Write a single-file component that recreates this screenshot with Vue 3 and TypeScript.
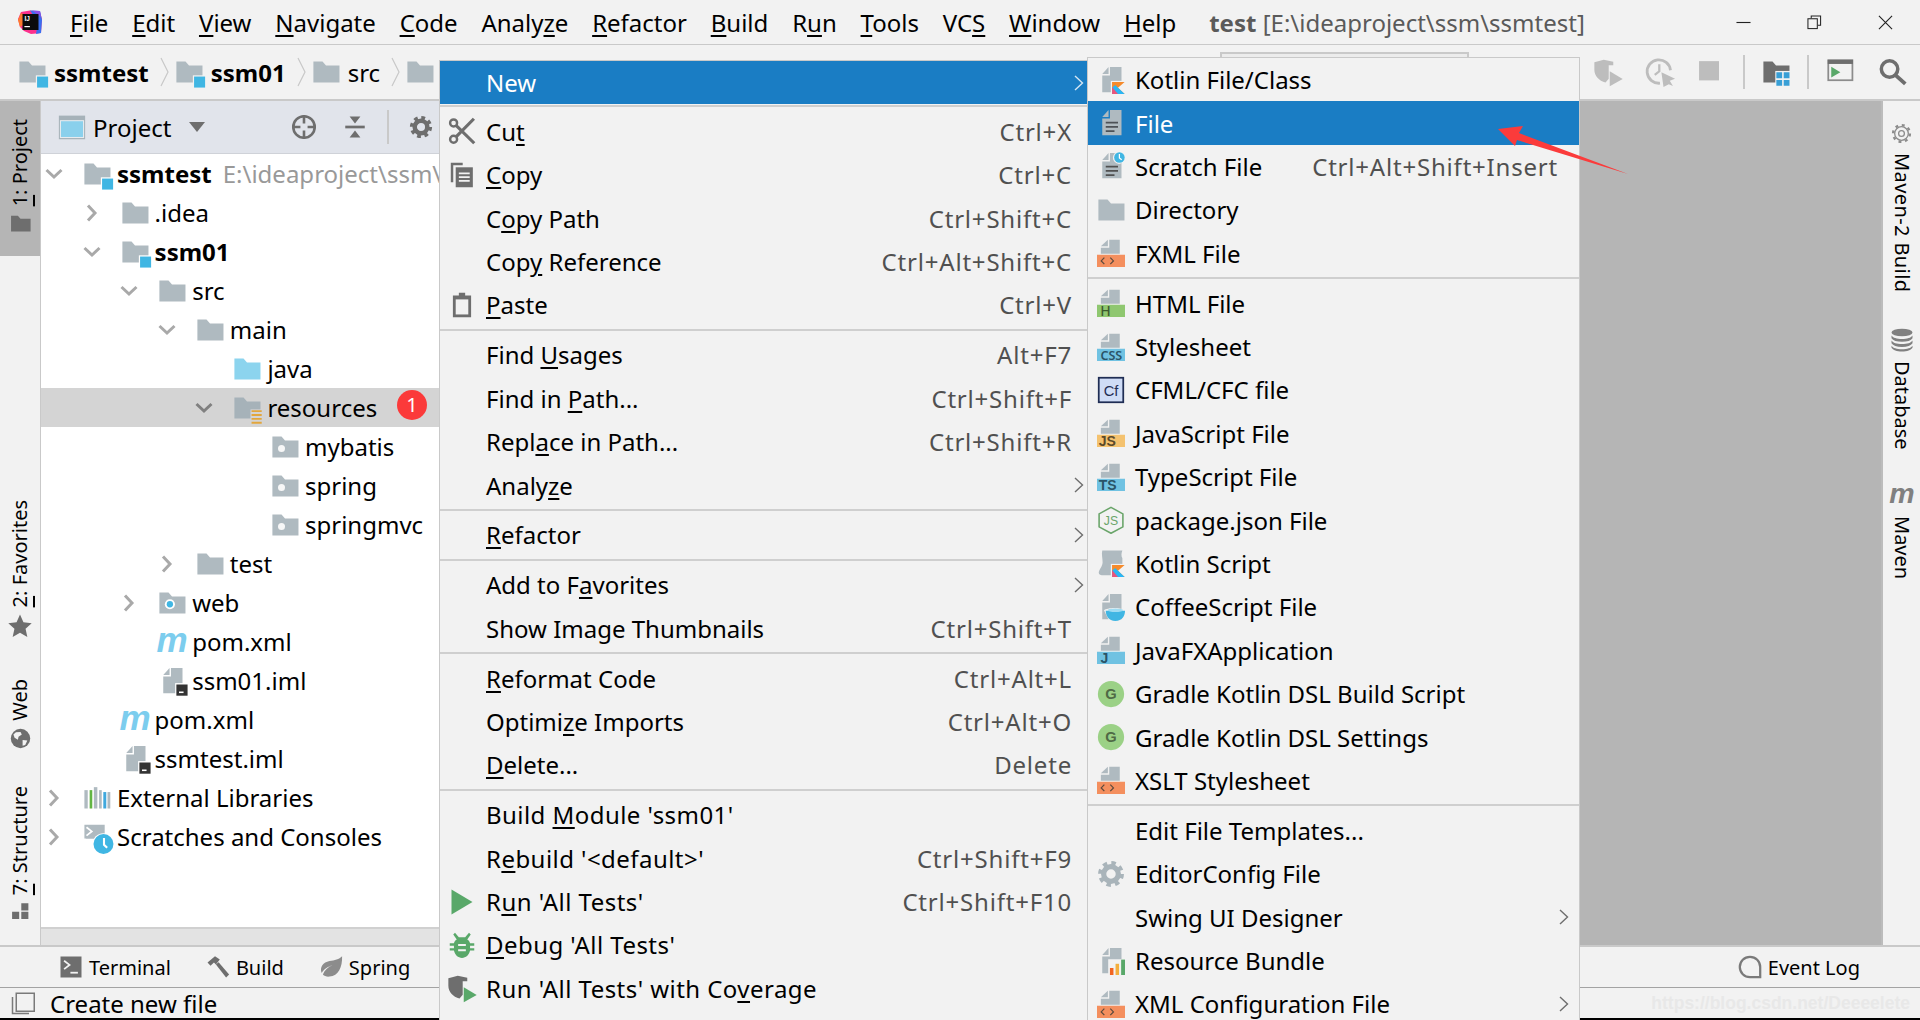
<template>
  <div class="ide">
    <svg class="sprite" aria-hidden="true">
      <defs>
        <path id="fold" d="M.8 2H6l2 2.3h7.7V14H.8z" />
        <g id="doc-top" fill="#afbac0">
          <path d="M7 .4h6v8H2.2V5H7z" />
          <path d="M2.2 4.2 6.2.4v3.8z" />
        </g>
        <g id="doc-full" fill="#afbac0">
          <path d="M7.4.6H14V15H3V5.4h4.4z" />
          <path d="M3 4.6 6.6.6v4z" />
        </g>
        <g id="kot">
          <path d="M8.6 9.2h7.2L12 12.4l3.8 3.6h-3.6l-3.6-3.4z" fill="#f58a2b" />
          <path d="M8.6 12.4V16h7.2l-3.8-3.6-1.6-1.6z" fill="#29b6f6" />
          <path d="M8.6 12v4h3.4z" fill="#e8557c" />
        </g>
        <symbol id="folder" viewBox="0 0 16 16"><use href="#fold" fill="#afbac0" /></symbol>
        <symbol id="folder-blue" viewBox="0 0 16 16"><use href="#fold" fill="#8cd4ee" /></symbol>
        <symbol id="folder-module" viewBox="0 0 16 16" overflow="visible">
          <use href="#fold" fill="#afbac0" />
          <rect x="10.2" y="9.9" width="7.4" height="7.4" fill="#fff" />
          <rect x="10.9" y="10.6" width="6.3" height="6.3" fill="#40b6e3" />
        </symbol>
        <symbol id="folder-module-grey" viewBox="0 0 16 16" overflow="visible">
          <use href="#fold" fill="#afbac0" />
          <rect x="10.2" y="9.9" width="7.4" height="7.4" fill="#f2f2f2" />
          <rect x="10.9" y="10.6" width="6.3" height="6.3" fill="#40b6e3" />
        </symbol>
        <symbol id="folder-res" viewBox="0 0 16 16" overflow="visible">
          <use href="#fold" fill="#a6b2b9" />
          <rect x="10" y="8.8" width="7" height="8.4" fill="#d4d4d4" />
          <path d="M10.6 9.8h5.8M10.6 12h5.8M10.6 14.2h5.8M10.6 16.4h5.8" stroke="#e2a63d" stroke-width="1.1" />
        </symbol>
        <symbol id="folder-pkg" viewBox="0 0 16 16">
          <use href="#fold" fill="#afbac0" />
          <circle cx="6" cy="8.8" r="2" fill="#f7f7f7" />
        </symbol>
        <symbol id="folder-web" viewBox="0 0 16 16">
          <use href="#fold" fill="#afbac0" />
          <circle cx="6.8" cy="8.7" r="2.9" fill="#fff" />
          <circle cx="6.8" cy="8.7" r="1.8" fill="#40b6e3" />
        </symbol>
        <symbol id="maven" viewBox="0 0 16 16" overflow="visible">
          <text x="8" y="13.6" text-anchor="middle" font-family="Liberation Sans, sans-serif" font-weight="700" font-style="italic" font-size="20" fill="#7ccdee">m</text>
        </symbol>
        <symbol id="maven-grey" viewBox="0 0 16 16" overflow="visible">
          <text x="8" y="13.2" text-anchor="middle" font-family="Liberation Sans, sans-serif" font-weight="700" font-style="italic" font-size="19" fill="#808080">m</text>
        </symbol>
        <symbol id="iml" viewBox="0 0 16 16" overflow="visible">
          <use href="#doc-full" />
          <rect x="9.8" y="9.2" width="7.8" height="7.8" fill="#fff" />
          <rect x="10.5" y="10" width="6.4" height="6.4" fill="#333" />
          <rect x="12" y="14" width="2.6" height=".9" fill="#fff" />
        </symbol>
        <symbol id="libs" viewBox="0 0 16 16">
          <rect x=".8" y="3.5" width="1.9" height="10.5" fill="#afbac0" />
          <rect x="3.8" y="3.5" width="1.5" height="10.5" fill="#62b543" />
          <rect x="6.2" y="1.8" width="2" height="12.2" fill="#afbac0" />
          <rect x="9.2" y="3.5" width="1.5" height="10.5" fill="#afbac0" />
          <rect x="11.6" y="4.6" width="1.7" height="9.4" fill="#40a8dd" />
          <rect x="14" y="4.6" width="1.6" height="9.4" fill="#afbac0" />
        </symbol>
        <symbol id="scratches" viewBox="0 0 16 16" overflow="visible">
          <path d="M.8 1h11.6v8H.8z" fill="#afbac0" />
          <path d="M2 2.4 5 4.8 2 7.2M.8 9 4 13" fill="none" stroke="#fff" stroke-width="1" />
          <circle cx="11.7" cy="12" r="6.2" fill="#fff" />
          <circle cx="11.7" cy="12" r="5.7" fill="#40b6e3" />
          <path d="M12 8.6v3.8l1.8 1.8" fill="none" stroke="#fff" stroke-width="1.2" />
        </symbol>
        <symbol id="panel" viewBox="0 0 16 16">
          <rect x=".5" y="1.5" width="15" height="13.5" fill="#a6b2b9" />
          <rect x="1.4" y="4.4" width="13.2" height="9.6" fill="#8ad0ec" stroke="#e6ebef" stroke-width=".6" />
        </symbol>
        <symbol id="target" viewBox="0 0 16 16" overflow="visible">
          <circle cx="8" cy="8" r="6.6" fill="none" stroke="#6e6e6e" stroke-width="1.6" />
          <path d="M8 .8v5M8 10.2v5M.8 8h5M10.2 8h5" stroke="#6e6e6e" stroke-width="1.6" />
        </symbol>
        <symbol id="collapse" viewBox="0 0 16 16">
          <path d="M1.5 8h13" stroke="#6e6e6e" stroke-width="1.8" />
          <path d="M4.4 1h7.2L8 5.6zM8 10.4 11.6 15H4.4z" fill="#6e6e6e" />
        </symbol>
        <symbol id="gear" viewBox="0 0 16 16">
          <circle cx="8" cy="8" r="4.2" fill="none" stroke="currentColor" stroke-width="3" />
          <circle cx="8" cy="8" r="6.2" fill="none" stroke="currentColor" stroke-width="2.4" stroke-dasharray="2.5 2.37" />
        </symbol>
        <symbol id="gear-line" viewBox="0 0 16 16">
          <circle cx="8" cy="8" r="2.2" fill="none" stroke="#8c8c8c" stroke-width="1" />
          <circle cx="8" cy="8" r="5.2" fill="none" stroke="#8c8c8c" stroke-width="1" />
          <circle cx="8" cy="8" r="6.4" fill="none" stroke="#8c8c8c" stroke-width="1.8" stroke-dasharray="2.2 2.83" />
        </symbol>
        <symbol id="scissors" viewBox="0 0 16 16">
          <g fill="none" stroke="#6e6e6e">
            <circle cx="3.2" cy="3.4" r="2" stroke-width="1.4" />
            <circle cx="3.2" cy="12.7" r="2" stroke-width="1.4" />
            <path d="M4.6 4.8 15 15M4.6 11.3 14.8 1" stroke-width="1.8" />
          </g>
        </symbol>
        <symbol id="copy" viewBox="0 0 16 16">
          <path d="M1.6 1h6.8v1.4H3v9.8H1.6z" fill="#6e6e6e" />
          <path d="M4.4 3.6h9.8V15H4.4z" fill="#6e6e6e" />
          <path d="M6.2 7h6.2M6.2 9.2h6.2M6.2 11.4h6.2" stroke="#f2f2f2" stroke-width="1" />
        </symbol>
        <symbol id="paste" viewBox="0 0 16 16">
          <path d="M2.8 2.6h3.4V1h3.6v1.6h3.4V15H2.8z" fill="#6e6e6e" />
          <rect x="4.4" y="4.8" width="7.2" height="8.6" fill="#f2f2f2" />
        </symbol>
        <symbol id="run" viewBox="0 0 16 16"><path d="M2 .8 14 8 2 15.2z" fill="#59a869" /></symbol>
        <symbol id="bug" viewBox="0 0 16 16">
          <path d="M4 1l2.2 2.6h3.6L12 1l1 1-2 2.8c1 .6 1.4 1.4 1.6 2.2H15v1.4h-2.4v1.4H15v1.4h-2.4c-.5 2.6-2.4 4.2-4.6 4.2s-4.1-1.6-4.6-4.2H1V9.8h2.4V8.4H1V7h2.4c.2-.8.6-1.6 1.6-2.2L3 2z" fill="#59a869" />
          <path d="M5.8 8h4.4M5.8 11h4.4" stroke="#f2f2f2" stroke-width="1.1" />
        </symbol>
        <symbol id="coverage" viewBox="0 0 16 16" overflow="visible">
          <path d="M.2 2.4 5.6 1 11 2.2v2H8.4v7.6L6.6 14C2.8 13 .2 10.4.2 6.6z" fill="currentColor" />
          <path d="M9 7.6 16.4 12 9 16.2z" fill="var(--tri, #59a869)" />
        </symbol>
        <symbol id="history" viewBox="0 0 16 16" overflow="visible">
          <path d="M8 14.4A6.7 6.7 0 1 1 14 7" fill="none" stroke="#bdbdbd" stroke-width="1.6" />
          <path d="M7.6 3.6v4L5 9.6" fill="none" stroke="#bdbdbd" stroke-width="1.3" />
          <path d="M8.8 8.2 16.6 11.8 13.6 13 15.4 16 13 15 10 16.6z" fill="#bdbdbd" />
        </symbol>
        <symbol id="stop" viewBox="0 0 16 16"><rect x=".6" y="1.8" width="11.4" height="11" fill="#bdbdbd" /></symbol>
        <symbol id="structure-dark" viewBox="0 0 16 16" overflow="visible">
          <path d="M.8 2H6l2 2.3h7.7V14H.8z" fill="#6e6e6e" />
          <rect x="7.6" y="7.4" width="8.4" height="8.6" fill="#f2f2f2" />
          <path d="M8.2 8.2h3.3v3.4H8.2zM12.4 8.2h3.3v3.4h-3.3zM8.2 12.5h3.3v3.3H8.2zM12.4 12.5h3.3v3.3h-3.3z" fill="#389fd6" />
        </symbol>
        <symbol id="run-window" viewBox="0 0 16 16">
          <rect x="1.3" y="1.3" width="13.8" height="11.4" fill="none" stroke="#8c8c8c" stroke-width="1" />
          <rect x="1" y="1" width="14.4" height="2.4" fill="#6e6e6e" />
          <path d="M3 5l5.2 3.1L3 11.2z" fill="#59a869" />
        </symbol>
        <symbol id="search" viewBox="0 0 16 16" overflow="visible">
          <circle cx="6.6" cy="6.3" r="4.7" fill="none" stroke="#6e6e6e" stroke-width="2" />
          <path d="M10 9.8l5.6 5" stroke="#6e6e6e" stroke-width="2.2" />
        </symbol>
        <symbol id="logo" viewBox="0 0 24 24">
          <path d="M3 2 12 .5 22 2l2 7-1 14-10 1-7-3-4-4-2-8z" fill="#fc318c" />
          <path d="M12 .5 22 1l2 9-1 13-5 1 2-12z" fill="#3a6ff0" />
          <path d="M14 .5 22 1l1 6z" fill="#8a4fe8" />
          <path d="M0 10 3 3l4 2-2 10-3 2z" fill="#fe7a2f" />
          <rect x="4.5" y="4" width="16" height="16" fill="#0b0b0b" />
          <text x="6.4" y="11.4" font-family="Liberation Sans, sans-serif" font-size="6.5" font-weight="700" fill="#fff">IJ</text>
          <rect x="6.4" y="16" width="5.5" height="1.2" fill="#fff" />
        </symbol>
        <symbol id="star" viewBox="0 0 16 16"><path d="M8 .4l2.3 5.1 5.5.6-4.1 3.7 1.2 5.5L8 12.5l-4.9 2.8 1.2-5.5L.2 6.1l5.5-.6z" fill="#6e6e6e" /></symbol>
        <symbol id="globe" viewBox="0 0 16 16">
          <circle cx="8" cy="8" r="7.4" fill="#6e6e6e" />
          <path d="M4.5 3.2 8 3l1 2-2.5 1.6L6 9 3.5 7.5 2.6 5zM9.6 9.2l3.6.4-1.6 3.4-2 .6z" fill="#f2f2f2" />
        </symbol>
        <symbol id="struct" viewBox="0 0 16 16">
          <path d="M8.6 1H14v5.4H8.6zM1.6 7.5H7v5.4H1.6zM8.6 7.5H14v5.4H8.6z" fill="#6e6e6e" />
        </symbol>
        <symbol id="db" viewBox="0 0 16 16">
          <g fill="#808080">
            <ellipse cx="8" cy="3" rx="7" ry="2.5" />
            <path d="M1 5c1 1.6 3.5 2.3 7 2.3S14 6.6 15 5v1.8C14 8.4 11.5 9.2 8 9.2S2 8.4 1 6.8zM1 8.4c1 1.6 3.5 2.3 7 2.3s6-.7 7-2.3v1.8c-1 1.6-3.5 2.4-7 2.4s-6-.8-7-2.4zM1 11.8c1 1.6 3.5 2.3 7 2.3s6-.7 7-2.3v1.4c-1 1.6-3.5 2.5-7 2.5s-6-.9-7-2.5z" />
          </g>
        </symbol>
        <symbol id="terminal" viewBox="0 0 16 16">
          <rect x="1" y="1" width="14" height="14" fill="#6e6e6e" />
          <path d="M3.4 3.8 7 6.6 3.4 9.4" fill="none" stroke="#f2f2f2" stroke-width="1.2" />
          <path d="M7.6 11.8h5" stroke="#f2f2f2" stroke-width="1.2" />
        </symbol>
        <symbol id="hammer" viewBox="0 0 16 16">
          <path d="M1 5 6 .8l1.5 1L9.2 3 6.6 6.4 5.3 5 3 7.2z" fill="#6e6e6e" />
          <path d="M6.6 6.4 8.4 4.8 15.4 13l-2 2z" fill="#6e6e6e" />
        </symbol>
        <symbol id="leaf" viewBox="0 0 16 16">
          <path d="M15.4.8C15.6 8 13 14 7 14.4c-2 .2-3.4-.4-4.4-1.4C3.6 10 6 8 9 6.8 6 7.6 3 9.6 1.8 12 .2 8.2 2.8 4.8 7 4c3.4-.6 6.4-1 8.4-3.200z" fill="#8c8c8c" />
        </symbol>
        <symbol id="event" viewBox="0 0 16 16">
          <path d="M8 1.2A6.8 6.8 0 0 1 14.8 8v6.8H8A6.8 6.8 0 0 1 8 1.200z" fill="none" stroke="#7a7a7a" stroke-width="1.5" />
        </symbol>
        <symbol id="status-win" viewBox="0 0 16 16">
          <rect x="3.5" y="1.5" width="12" height="12" fill="none" stroke="#7a7a7a" stroke-width="1" />
          <path d="M1 4v11h11" fill="none" stroke="#7a7a7a" stroke-width="1" />
        </symbol>
        <symbol id="kotlin-file" viewBox="0 0 16 16"><use href="#doc-full" /><rect x="7.9" y="8.5" width="9" height="8" fill="#f2f2f2" /><use href="#kot" /></symbol>
        <symbol id="file" viewBox="0 0 16 16">
          <use href="#doc-full" />
          <path d="M5 7.8h7M5 10.2h7M5 12.6h5" stroke="#4d5257" stroke-width="1" />
        </symbol>
        <symbol id="scratch" viewBox="0 0 16 16" overflow="visible">
          <use href="#doc-full" />
          <path d="M5 8.4h7M5 10.8h7M5 13.2h5" stroke="#505050" stroke-width="1" />
          <circle cx="12.6" cy="3.3" r="3.5" fill="#f2f2f2" />
          <circle cx="12.8" cy="3.1" r="3" fill="#40b6e3" />
          <path d="M12.8 1.2v2.2l1.3 1" fill="none" stroke="#fff" stroke-width=".7" />
        </symbol>
        <symbol id="fxml" viewBox="0 0 16 16">
          <use href="#doc-top" />
          <rect y="9" width="16" height="7" fill="#f48f5e" />
          <path d="M4.2 10.6 2.4 12.5l1.8 1.9M7.6 10.6l1.8 1.9-1.8 1.9" fill="none" stroke="#5c4a3e" stroke-width=".7" />
        </symbol>
        <symbol id="html" viewBox="0 0 16 16">
          <use href="#doc-top" />
          <rect y="9" width="16" height="7" fill="#8fc770" />
          <text x="1.8" y="15.2" font-family="Noto Sans, sans-serif" font-size="8" font-weight="500" fill="#3d5a2e">H</text>
        </symbol>
        <symbol id="css" viewBox="0 0 16 16">
          <use href="#doc-top" />
          <rect y="9" width="16" height="7" fill="#70c2e2" />
          <text x="8.2" y="15.2" text-anchor="middle" font-family="Noto Sans, sans-serif" font-size="7.2" font-weight="600" fill="#2a5468">CSS</text>
        </symbol>
        <symbol id="js" viewBox="0 0 16 16">
          <use href="#doc-top" />
          <rect y="9" width="16" height="7" fill="#f4c26f" />
          <text x="1" y="15.2" font-family="Liberation Sans, sans-serif" font-size="8" font-weight="700" fill="#5c4a2a">JS</text>
        </symbol>
        <symbol id="ts" viewBox="0 0 16 16">
          <use href="#doc-top" />
          <rect y="9" width="16" height="7" fill="#70c2e2" />
          <text x="1" y="15.2" font-family="Liberation Sans, sans-serif" font-size="8" font-weight="700" fill="#2a5468">TS</text>
        </symbol>
        <symbol id="jfx" viewBox="0 0 16 16">
          <use href="#doc-top" />
          <rect y="9" width="16" height="7" fill="#70c2e2" />
          <text x="2" y="15.2" font-family="Liberation Sans, sans-serif" font-size="8" font-weight="700" fill="#2a5468">J</text>
        </symbol>
        <symbol id="cf" viewBox="0 0 16 16">
          <rect x="1" y="1" width="14" height="14" fill="#cfdcf6" stroke="#1f2d54" stroke-width="1" />
          <text x="8" y="11.4" text-anchor="middle" font-family="Liberation Sans, sans-serif" font-size="8.4" fill="#1f2d54">Cf</text>
        </symbol>
        <symbol id="pkg-json" viewBox="0 0 16 16">
          <path d="M8 .8 14.8 4.5v7.4L8 15.6 1.2 11.9V4.5z" fill="none" stroke="#6aa56a" stroke-width=".9" />
          <text x="8" y="10.8" text-anchor="middle" font-family="Liberation Sans, sans-serif" font-size="7" fill="#6aa56a">JS</text>
        </symbol>
        <symbol id="kts" viewBox="0 0 16 16">
          <path d="M3 .8h11.5c-.6 1.4-.8 3 0 4.500V15H4c-2 0-3-.4-3-1.500 0-1.600 2.200-3.600 2.200-6S2.500 3 3 .8z" fill="#afbac0" />
          <rect x="7.9" y="8.5" width="9" height="8" fill="#f2f2f2" />
          <use href="#kot" />
        </symbol>
        <symbol id="coffee" viewBox="0 0 16 16">
          <use href="#doc-full" />
          <path d="M4 9.8c1.400-1.200 8-2 11.600-.2L13 16H7z" fill="#f2f2f2" />
          <path d="M5 10.2h11c0 3-1.600 5.800-5.500 5.800S5 13 5 10.200z" fill="#40b6e3" />
          <ellipse cx="10.5" cy="9.8" rx="4.4" ry="1" fill="#9fdcf2" />
        </symbol>
        <symbol id="gradle" viewBox="0 0 16 16">
          <circle cx="8" cy="8" r="7.5" fill="#9bd186" />
          <text x="8" y="11" text-anchor="middle" font-family="Liberation Sans, sans-serif" font-size="8.4" font-weight="700" fill="#4f6a45">G</text>
        </symbol>
        <symbol id="bundle" viewBox="0 0 16 16">
          <use href="#doc-full" />
          <rect x="6.4" y="7" width="10" height="9.4" fill="#f2f2f2" />
          <rect x="7.4" y="12" width="2" height="4" fill="#f26522" />
          <rect x="10.6" y="9.6" width="2" height="6.4" fill="#f4af3d" />
          <rect x="13.8" y="7.2" width="2.2" height="8.8" fill="#59a869" />
        </symbol>
        <symbol id="pfolder" viewBox="0 0 16 16"><path d="M.8 2H6l2 2.3h7.7V14H.8z" fill="#6e6e6e" /></symbol>
      </defs>
    </svg>

    <header class="titlebar">
      <svg class="logo"><use href="#logo" /></svg>
      <nav class="menubar">
        <span v-for="m in menuBar" :key="m"><template v-for="(part, i) in mnemonic(m)" :key="i"><u v-if="i === 1">{{ part }}</u><template v-else>{{ part }}</template></template></span>
      </nav>
      <div class="win-title"><b>test</b> [E:\ideaproject\ssm\ssmtest]</div>
      <div class="win-btns">
        <svg viewBox="0 0 16 16"><path d="M.5 8h15" stroke="#222" stroke-width="1.2" /></svg>
        <svg viewBox="0 0 16 16">
          <path d="M4.5 3.5V1h10v10h-3" fill="none" stroke="#222" stroke-width="1.1" />
          <rect x="1" y="4" width="10" height="10.5" fill="none" stroke="#222" stroke-width="1.1" />
        </svg>
        <svg viewBox="0 0 16 16"><path d="M1 1l14 14M15 1 1 15" stroke="#222" stroke-width="1.2" /></svg>
      </div>
    </header>

    <div class="toolbar">
      <div class="crumbs">
        <template v-for="(c, i) in crumbs" :key="i">
          <svg class="ico"><use :href="'#' + c.icon" /></svg>
          <span v-if="c.label" :class="{ bold: c.bold }" class="crumb-label">{{ c.label }}</span>
          <svg v-if="c.label" class="crumb-sep" viewBox="0 0 10 30"><path d="M1 1l7 14-7 14" fill="none" stroke="#c8c8c8" stroke-width="1.2" /></svg>
        </template>
      </div>
      <div class="runbox"></div>
      <div class="actions">
        <svg class="ico soft"><use href="#coverage" /></svg>
        <svg class="ico"><use href="#history" /></svg>
        <svg class="ico"><use href="#stop" /></svg>
        <i class="act-sep"></i>
        <svg class="ico"><use href="#structure-dark" /></svg>
        <i class="act-sep"></i>
        <svg class="ico"><use href="#run-window" /></svg>
        <svg class="ico"><use href="#search" /></svg>
      </div>
    </div>

    <div class="body">
      <aside class="strip left">
        <div class="tool active">
          <span class="vtext"><u>1</u>: Project</span>
          <svg class="tool-ico"><use href="#pfolder" /></svg>
        </div>
        <div class="tool fav">
          <span class="vtext"><u>2</u>: Favorites</span>
          <svg class="tool-ico big"><use href="#star" /></svg>
        </div>
        <div class="tool">
          <span class="vtext">Web</span>
          <svg class="tool-ico"><use href="#globe" /></svg>
        </div>
        <div class="tool">
          <span class="vtext"><u>7</u>: Structure</span>
          <svg class="tool-ico"><use href="#struct" /></svg>
        </div>
      </aside>

      <section class="project">
        <div class="project-head">
          <svg class="ico"><use href="#panel" /></svg>
          <span class="project-title">Project</span>
          <svg class="drop" viewBox="0 0 16 10"><path d="M0 0h16L8 10z" fill="#6e6e6e" /></svg>
          <svg class="ico target"><use href="#target" /></svg>
          <svg class="ico collapse"><use href="#collapse" /></svg>
          <i class="head-sep"></i>
          <svg class="ico cog"><use href="#gear" /></svg>
        </div>
        <div class="tree">
          <div
            v-for="row in tree"
            :key="row.label + row.depth"
            class="row"
            :class="{ selected: row.selected }"
            :style="{ paddingLeft: 3 + row.depth * 37.6 + 'px' }"
          >
            <span class="chev-box">
              <svg v-if="row.chev" class="chev" :class="row.chev" viewBox="0 0 20 20">
                <path d="M6 2.5l7 7.5-7 7.5" fill="none" stroke="currentColor" stroke-width="3" />
              </svg>
            </span>
            <svg class="ico"><use :href="'#' + row.icon" /></svg>
            <span class="row-label" :class="{ bold: row.bold }">{{ row.label }}</span>
            <span v-if="row.path" class="row-path">{{ row.path }}</span>
            <span v-if="row.selected" class="badge">1</span>
          </div>
        </div>
        <div class="hscroll"></div>
      </section>

      <div class="editor"></div>

      <aside class="strip right">
        <div class="tool stretched">
          <svg class="tool-ico"><use href="#gear-line" /></svg>
          <span class="vtext">Maven-2 Build</span>
        </div>
        <div class="tool">
          <svg class="tool-ico big"><use href="#db" /></svg>
          <span class="vtext">Database</span>
        </div>
        <div class="tool">
          <svg class="tool-ico big"><use href="#maven-grey" /></svg>
          <span class="vtext">Maven</span>
        </div>
      </aside>
    </div>

    <div class="tools">
      <span class="tools-item"><svg class="small"><use href="#terminal" /></svg>Terminal</span>
      <span class="tools-item"><svg class="small"><use href="#hammer" /></svg>Build</span>
      <span class="tools-item"><svg class="small"><use href="#leaf" /></svg>Spring</span>
      <span class="tools-item event"><svg class="small"><use href="#event" /></svg>Event Log</span>
    </div>

    <footer class="status">
      <svg class="small"><use href="#status-win" /></svg>
      <span>Create new file</span>
      <span class="watermark">https://blog.csdn.net/Deeeelete</span>
    </footer>

    <div class="menu main-menu">
      <template v-for="(item, i) in mainMenu" :key="i">
        <div v-if="item.sep" class="menu-sep"></div>
        <div v-else class="menu-row" :class="{ hot: item.hot }">
          <svg class="ico menu-ico" :class="{ dark: item.icon === 'coverage' }"><use v-if="item.icon" :href="'#' + item.icon" /></svg>
          <span class="menu-label" :class="{ quoted: item.label?.includes('\'') }"><template v-for="(part, j) in mnemonic(item.label)" :key="j"><u v-if="j === 1">{{ part }}</u><template v-else>{{ part }}</template></template></span>
          <span v-if="item.keys" class="keys">{{ item.keys }}</span>
          <svg v-if="item.sub" class="menu-chev" viewBox="0 0 10 16"><path d="M1 1l7.5 7L1 15" fill="none" stroke="currentColor" stroke-width="1.4" /></svg>
        </div>
      </template>
    </div>

    <div class="menu sub-menu">
      <template v-for="(item, i) in newMenu" :key="i">
        <div v-if="item.sep" class="menu-sep"></div>
        <div v-else class="menu-row" :class="{ hot: item.hot }">
          <svg class="ico menu-ico"><use v-if="item.icon" :href="'#' + item.icon" /></svg>
          <span class="menu-label">{{ item.label }}</span>
          <span v-if="item.keys" class="keys">{{ item.keys }}</span>
          <svg v-if="item.sub" class="menu-chev" viewBox="0 0 10 16"><path d="M1 1l7.5 7L1 15" fill="none" stroke="currentColor" stroke-width="1.4" /></svg>
        </div>
      </template>
    </div>

    <svg class="arrow" viewBox="0 0 140 56">
      <path d="M0 7 25 4 21 11 130 52 19 18 17 24z" fill="#fb3b3b" />
    </svg>
  </div>
</template>

<script setup lang="ts">
interface TreeRow {
  label: string;
  depth: number;
  icon: string;
  chev?: 'open' | 'closed';
  bold?: boolean;
  path?: string;
  selected?: boolean;
}

interface MenuItem {
  label?: string;
  icon?: string;
  keys?: string;
  sub?: boolean;
  hot?: boolean;
  sep?: boolean;
}

// "_" marks the mnemonic letter
function mnemonic(label = ''): string[] {
  const i = label.indexOf('_');
  if (i < 0) return [label];
  return [label.slice(0, i), label[i + 1], label.slice(i + 2)];
}

const menuBar = ['_File', '_Edit', '_View', '_Navigate', '_Code', 'Analy_ze', '_Refactor', '_Build', 'R_un', '_Tools', 'VC_S', '_Window', '_Help'];

const crumbs = [
  { icon: 'folder-module-grey', label: 'ssmtest', bold: true },
  { icon: 'folder-module-grey', label: 'ssm01', bold: true },
  { icon: 'folder', label: 'src' },
  { icon: 'folder', label: '' },
];

const tree: TreeRow[] = [
  { label: 'ssmtest', depth: 0, icon: 'folder-module', chev: 'open', bold: true, path: 'E:\\ideaproject\\ssm\\' },
  { label: '.idea', depth: 1, icon: 'folder', chev: 'closed' },
  { label: 'ssm01', depth: 1, icon: 'folder-module', chev: 'open', bold: true },
  { label: 'src', depth: 2, icon: 'folder', chev: 'open' },
  { label: 'main', depth: 3, icon: 'folder', chev: 'open' },
  { label: 'java', depth: 4, icon: 'folder-blue' },
  { label: 'resources', depth: 4, icon: 'folder-res', chev: 'open', selected: true },
  { label: 'mybatis', depth: 5, icon: 'folder-pkg' },
  { label: 'spring', depth: 5, icon: 'folder-pkg' },
  { label: 'springmvc', depth: 5, icon: 'folder-pkg' },
  { label: 'test', depth: 3, icon: 'folder', chev: 'closed' },
  { label: 'web', depth: 2, icon: 'folder-web', chev: 'closed' },
  { label: 'pom.xml', depth: 2, icon: 'maven' },
  { label: 'ssm01.iml', depth: 2, icon: 'iml' },
  { label: 'pom.xml', depth: 1, icon: 'maven' },
  { label: 'ssmtest.iml', depth: 1, icon: 'iml' },
  { label: 'External Libraries', depth: 0, icon: 'libs', chev: 'closed' },
  { label: 'Scratches and Consoles', depth: 0, icon: 'scratches', chev: 'closed' },
];

const mainMenu: MenuItem[] = [
  { label: 'New', sub: true, hot: true },
  { sep: true },
  { label: 'Cu_t', icon: 'scissors', keys: 'Ctrl+X' },
  { label: '_Copy', icon: 'copy', keys: 'Ctrl+C' },
  { label: 'C_opy Path', keys: 'Ctrl+Shift+C' },
  { label: 'Cop_y Reference', keys: 'Ctrl+Alt+Shift+C' },
  { label: '_Paste', icon: 'paste', keys: 'Ctrl+V' },
  { sep: true },
  { label: 'Find _Usages', keys: 'Alt+F7' },
  { label: 'Find in _Path...', keys: 'Ctrl+Shift+F' },
  { label: 'Repl_ace in Path...', keys: 'Ctrl+Shift+R' },
  { label: 'Analy_ze', sub: true },
  { sep: true },
  { label: '_Refactor', sub: true },
  { sep: true },
  { label: 'Add to F_avorites', sub: true },
  { label: 'Show Image Thumbnails', keys: 'Ctrl+Shift+T' },
  { sep: true },
  { label: '_Reformat Code', keys: 'Ctrl+Alt+L' },
  { label: 'Optimi_ze Imports', keys: 'Ctrl+Alt+O' },
  { label: '_Delete...', keys: 'Delete' },
  { sep: true },
  { label: "Build _Module 'ssm01'" },
  { label: "R_ebuild '<default>'", keys: 'Ctrl+Shift+F9' },
  { label: "R_un 'All Tests'", icon: 'run', keys: 'Ctrl+Shift+F10' },
  { label: "_Debug 'All Tests'", icon: 'bug' },
  { label: "Run 'All Tests' with Co_verage", icon: 'coverage' },
];

const newMenu: MenuItem[] = [
  { label: 'Kotlin File/Class', icon: 'kotlin-file' },
  { label: 'File', icon: 'file', hot: true },
  { label: 'Scratch File', icon: 'scratch', keys: 'Ctrl+Alt+Shift+Insert' },
  { label: 'Directory', icon: 'folder' },
  { label: 'FXML File', icon: 'fxml' },
  { sep: true },
  { label: 'HTML File', icon: 'html' },
  { label: 'Stylesheet', icon: 'css' },
  { label: 'CFML/CFC file', icon: 'cf' },
  { label: 'JavaScript File', icon: 'js' },
  { label: 'TypeScript File', icon: 'ts' },
  { label: 'package.json File', icon: 'pkg-json' },
  { label: 'Kotlin Script', icon: 'kts' },
  { label: 'CoffeeScript File', icon: 'coffee' },
  { label: 'JavaFXApplication', icon: 'jfx' },
  { label: 'Gradle Kotlin DSL Build Script', icon: 'gradle' },
  { label: 'Gradle Kotlin DSL Settings', icon: 'gradle' },
  { label: 'XSLT Stylesheet', icon: 'fxml' },
  { sep: true },
  { label: 'Edit File Templates...' },
  { label: 'EditorConfig File', icon: 'gear' },
  { label: 'Swing UI Designer', sub: true },
  { label: 'Resource Bundle', icon: 'bundle' },
  { label: 'XML Configuration File', icon: 'fxml', sub: true },
];
</script>

<style scoped>
.ide {
  position: relative;
  width: 1920px;
  height: 1020px;
  overflow: hidden;
  display: flex;
  flex-direction: column;
  background: #f2f2f2;
  color: #000;
  font-family: "Noto Sans", sans-serif;
  font-size: 24px;
}
.sprite {
  position: absolute;
  width: 0;
  height: 0;
}
.ico {
  width: 28px;
  height: 28px;
  flex: none;
  overflow: visible;
  color: #afbac0;
}
.bold {
  font-weight: 700;
}
u {
  text-underline-offset: 3px;
  text-decoration-thickness: 2px;
}

.titlebar {
  height: 45px;
  flex: none;
  display: flex;
  align-items: center;
  box-sizing: border-box;
  border-bottom: 1px solid #c9c9c9;
  padding-left: 18px;
}
.logo {
  width: 24px;
  height: 24px;
  flex: none;
}
.menubar {
  display: flex;
  gap: 23.8px;
  margin-left: 28px;
}
.win-title {
  margin-left: 33px;
  color: #5a5a5a;
  white-space: pre;
}
.win-btns {
  margin-left: auto;
  display: flex;
  gap: 56px;
  padding-right: 27px;
}
.win-btns svg {
  width: 15px;
  height: 15px;
}

.toolbar {
  height: 56px;
  flex: none;
  box-sizing: border-box;
  border-bottom: 2px solid #c9c9c9;
  display: flex;
  align-items: center;
  padding: 0 14px 0 18px;
}
.crumbs {
  display: flex;
  align-items: center;
}
.crumb-label {
  margin-left: 8px;
}
.crumb-sep {
  width: 10px;
  height: 30px;
  margin: 0 5px 0 11px;
}
.runbox {
  margin-left: auto;
  margin-right: 125px;
  width: 249px;
  height: 40px;
  align-self: flex-start;
  margin-top: 7px;
  box-sizing: border-box;
  border: 2px solid #c9c9c9;
  background: #ececec;
}
.actions {
  display: flex;
  align-items: center;
  gap: 24px;
}
.soft {
  color: #bdbdbd;
  --tri: #bdbdbd;
}
.act-sep {
  width: 2px;
  height: 34px;
  margin: 0 -7px;
  background: #c9c9c9;
}

.body {
  flex: 1;
  min-height: 0;
  display: flex;
}
.strip {
  flex: none;
  display: flex;
  flex-direction: column;
  box-sizing: border-box;
}
.strip.left {
  width: 41px;
  border-right: 1px solid #c9c9c9;
  padding-bottom: 22px;
}
.strip.left .tool {
  margin-top: 37px;
}
.strip.left .tool.active {
  margin-top: 0;
  height: 155px;
  padding-top: 18px;
  box-sizing: border-box;
  background: #b5b5b5;
}
.strip.left .tool.fav {
  margin-top: auto;
}
.strip.left .tool.fav + .tool {
  margin-top: 41px;
}
.tool {
  display: flex;
  flex-direction: column;
  align-items: center;
  gap: 7px;
  font-size: 20px;
}
.strip.left .vtext {
  writing-mode: vertical-rl;
  transform: rotate(180deg);
}
.vtext {
  writing-mode: vertical-rl;
  line-height: 24px;
}
.tool-ico {
  width: 21px;
  height: 21px;
  overflow: visible;
}
.tool-ico.big {
  width: 24px;
  height: 24px;
}
.strip.right {
  width: 39px;
  border-left: 2px solid #bcbcbc;
  padding-top: 22px;
  gap: 36px;
}
.strip.right .tool {
  gap: 9px;
}
.strip.right .tool:last-child {
  margin-top: -3px;
}
.tool.stretched {
  letter-spacing: 0.4px;
}

.project {
  width: 520px;
  flex: none;
  display: flex;
  flex-direction: column;
  background: #fff;
}
.project-head {
  height: 53px;
  flex: none;
  display: flex;
  align-items: center;
  box-sizing: border-box;
  border-bottom: 1px solid #cfd2d8;
  background: #e1e4eb;
  padding-left: 17px;
}
.project-title {
  margin-left: 7px;
}
.drop {
  width: 16px;
  height: 10px;
  margin-left: 18px;
}
.target {
  margin-left: 86px;
  width: 26px;
  height: 26px;
}
.collapse {
  margin-left: 26px;
  width: 24px;
  height: 24px;
}
.head-sep {
  width: 2px;
  height: 34px;
  margin-left: 20px;
  background: #c9c9c9;
}
.cog {
  margin-left: 20px;
  width: 24px;
  height: 24px;
  color: #6e6e6e;
}
.tree {
  flex: 1;
  min-height: 0;
}
.row {
  position: relative;
  height: 39px;
  display: flex;
  align-items: center;
  box-sizing: border-box;
  white-space: nowrap;
}
.row.selected {
  background: #d4d4d4;
}
.chev-box {
  width: 20px;
  height: 20px;
  margin-right: 19px;
  flex: none;
  color: #a9a9a9;
}
.selected .chev-box {
  color: #808080;
}
.chev {
  display: block;
  width: 20px;
  height: 20px;
}
.chev.open {
  transform: rotate(90deg);
}
.row-label {
  margin-left: 6px;
}
.row-path {
  margin-left: 11px;
  color: #999;
}
.badge {
  position: absolute;
  left: 356px;
  top: 2px;
  width: 30px;
  height: 30px;
  border-radius: 50%;
  background: #fb3a3a;
  color: #fff;
  font-size: 20px;
  line-height: 30px;
  text-align: center;
}
.hscroll {
  height: 18px;
  flex: none;
  box-sizing: border-box;
  border-top: 2px solid #d0d0d0;
  background: #e3e3e3;
}
.editor {
  flex: 1;
  background: #b5b5b5;
}

.tools {
  height: 42px;
  flex: none;
  box-sizing: border-box;
  border-top: 2px solid #c9c9c9;
  display: flex;
  align-items: center;
  gap: 35px;
  padding: 0 60px 0 59px;
  font-size: 20px;
}
.tools-item {
  display: flex;
  align-items: center;
  gap: 6px;
}
.tools-item.event {
  margin-left: auto;
}
.small {
  width: 24px;
  height: 24px;
  flex: none;
}
.status {
  height: 33px;
  flex: none;
  box-sizing: border-box;
  border-top: 1px solid #a3a3a3;
  border-bottom: 2px solid #000;
  display: flex;
  align-items: center;
  gap: 15px;
  padding: 0 10px 0 11px;
}
.watermark {
  margin-left: auto;
  font-family: "Liberation Sans", sans-serif;
  font-size: 17.5px;
  font-weight: 700;
  color: #e8e8e8;
}

.menu {
  position: absolute;
  box-sizing: border-box;
  bottom: 0;
  background: #f2f2f2;
  border: 1px solid #c9c9c9;
  border-bottom: 0;
  white-space: nowrap;
  overflow: hidden;
}
.main-menu {
  top: 60px;
  left: 439px;
  width: 649px;
  --row-pad-l: 8px;
  --row-pad-r: 15px;
  --chev-shift: -12px;
}
.sub-menu {
  top: 57px;
  left: 1087px;
  width: 493px;
  --row-pad-l: 9px;
  --row-pad-r: 21px;
  --chev-shift: -11px;
}
.menu-row {
  height: 43.4px;
  display: flex;
  align-items: center;
  padding: 0 var(--row-pad-r) 0 var(--row-pad-l);
}
.main-menu .menu-row.hot {
  margin-bottom: -1.2px;
}
.menu-row.hot {
  background: #1a7dc4;
  color: #fff;
}
.menu-ico {
  margin-right: 10px;
}
.menu-ico.dark {
  color: #6e6e6e;
}
.sub-menu .menu-ico {
  color: #a9b4ba;
}
.menu-label.quoted {
  letter-spacing: 0.45px;
}
.keys {
  margin-left: auto;
  letter-spacing: 0.8px;
  color: #505050;
}
.menu-chev {
  margin-left: auto;
  margin-right: var(--chev-shift);
  width: 10px;
  height: 16px;
  color: #6e6e6e;
}
.hot .menu-chev {
  color: #d5e6f3;
}
.menu-sep {
  height: 6.5px;
  display: flex;
  align-items: center;
}
.menu-sep::after {
  content: "";
  width: 100%;
  height: 2px;
  background: #cfcfcf;
}
.arrow {
  position: absolute;
  left: 1498px;
  top: 122px;
  width: 140px;
  height: 56px;
}
</style>
